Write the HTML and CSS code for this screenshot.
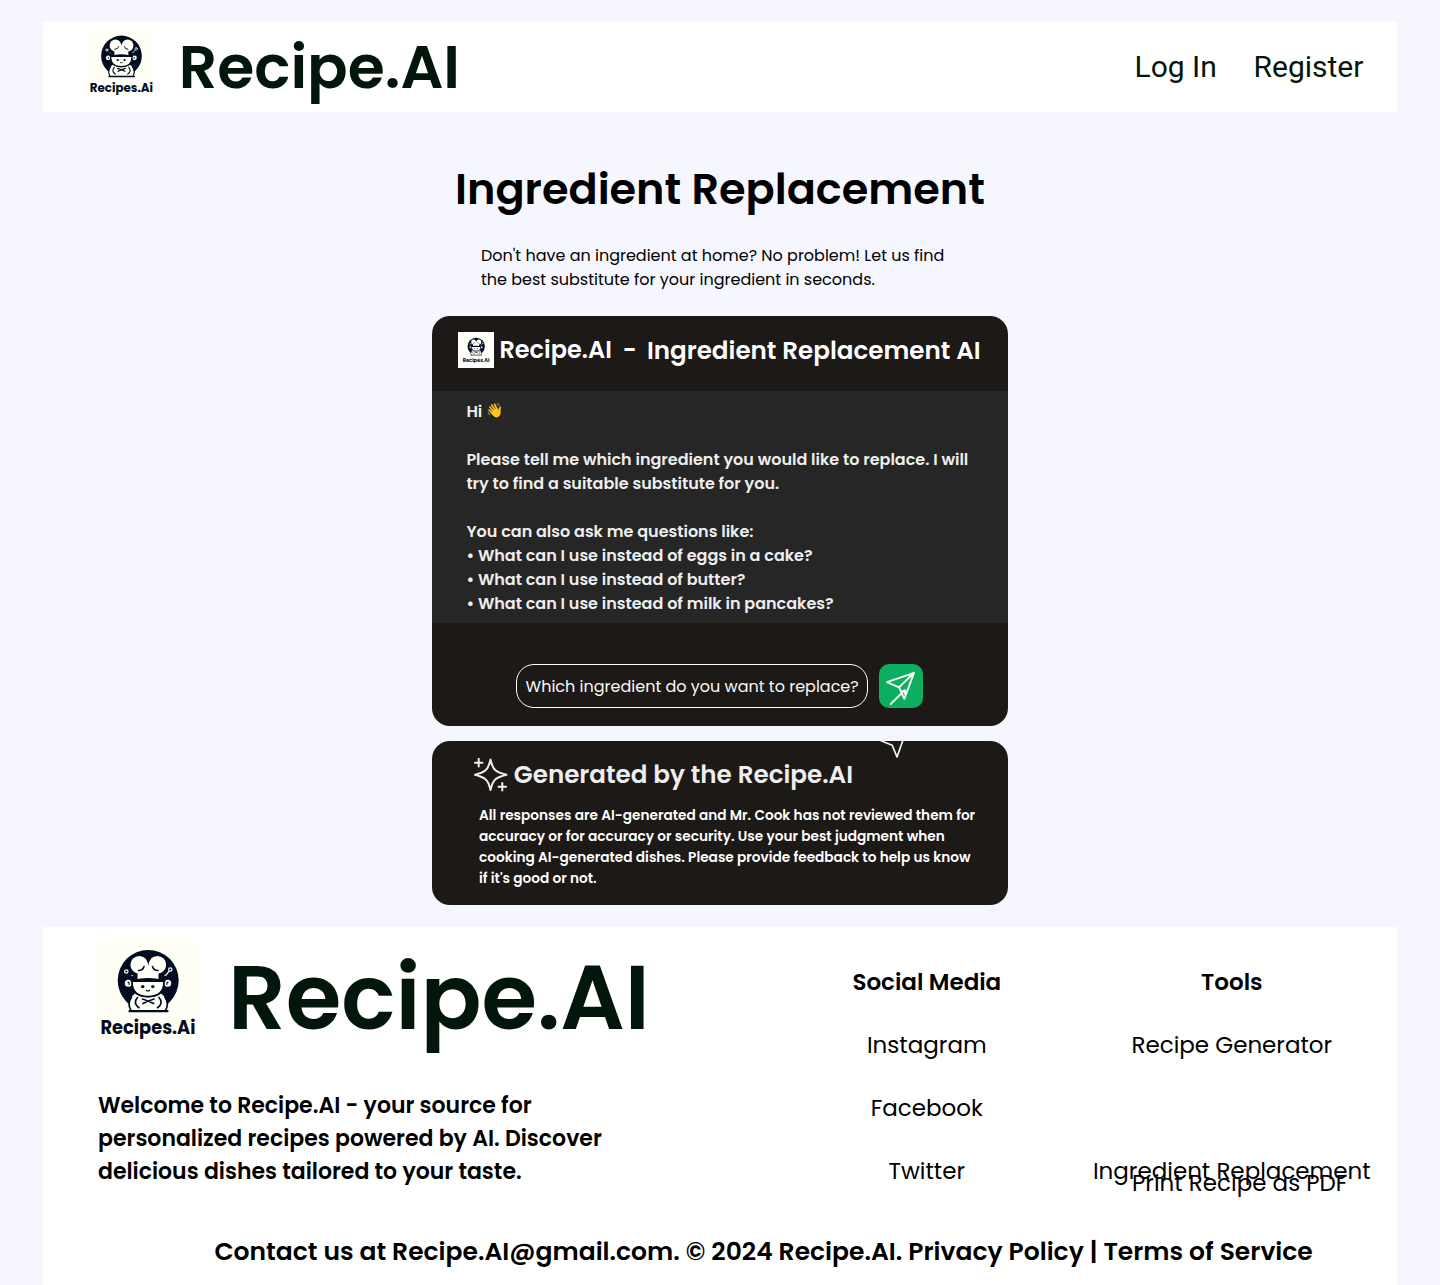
FILE: index.html
```html
<!DOCTYPE html>
<html lang="en">
<head>
<meta charset="utf-8">
<title>Recipe.AI - Ingredient Replacement</title>
<link rel="stylesheet" href="styles.css">
</head>
<body>
<svg class="defs" width="0" height="0" aria-hidden="true">
  <symbol id="chef-logo" viewBox="0 0 99 99">
    <rect width="99" height="99" fill="#fffff5"/>
    <circle cx="50.200" cy="40.400" r="30.500" fill="#020c20"/>
    <g fill="#fffff5">
      <circle cx="41.300" cy="24.800" r="8.900"/>
      <circle cx="59.300" cy="24.800" r="8.900"/>
      <path d="M39.500 31l10.500-6 10.500 6v8q-10.500-2-21 0z"/>
      <path d="M34 42h32q0 14.500-16 14.500T34 42z"/>
      <circle cx="30.300" cy="43.300" r="3.500"/>
      <circle cx="69.700" cy="43.300" r="3.500"/>
      <path d="M37 53.500q13 8 26 0q5.500 4 6 11q0 4-2 6.500H33q-2-2.500-2-6.500q.5-7 6-11z"/>
      <circle cx="34" cy="35.500" r=".7"/>
      <circle cx="67" cy="35.500" r=".7"/>
    </g>
    <path d="M46.500 16.500L50.300 23l3.800-6.500z" fill="#020c20"/>
    <g fill="none" stroke="#020c20" stroke-width="1.700" stroke-linecap="round">
      <path d="M33.500 41q16.500-2 33 0" stroke-width="2"/>
      <path d="M40.500 30.500q4.500 0 5.500-4M60 30.500q-4.500 0-5.500-4" stroke-width="1.500"/>
      <path d="M48.300 50.300q1.700 1.400 3.400 0" stroke-width="1.200"/>
      <path d="M34 42q0 14.500 16 14.500T66 42"/>
      <path d="M33.500 57q-4.500 7-.5 13.500M67 57q4.500 7 .5 13.500"/>
      <path d="M39.500 57.500q-5 5.500 1.500 10.200M61 57.500q5 5.500-1.500 10.200M44.500 59q5 1.500 11 4.500M56 59q-5 1.500-11 4.500"/>
      <path d="M31.500 71.200h38" stroke-width="2.200"/>
      <path d="M30 42.200q1.500.3 1.200 2.300M70 42.200q-1.500.3-1.200 2.300" stroke-width="1.200"/>
    </g>
    <circle cx="44.700" cy="46.600" r="1.700" fill="#020c20"/>
    <circle cx="54.800" cy="46.600" r="1.700" fill="#020c20"/>
    <g fill="none" stroke="#fffff5" stroke-width="1.200" stroke-linecap="round">
      <circle cx="28.300" cy="31.500" r="1.700"/>
      <circle cx="72.300" cy="29.500" r="1.700"/>
      <path d="M71 31.300l-3 3.700"/>
    </g>
    <text class="logo-word" x="2.500" y="94" textLength="95" lengthAdjust="spacingAndGlyphs">Recipes.Ai</text>
  </symbol>
</svg>

<header class="topbar">
  <svg class="topbar-logo"><use href="#chef-logo"/></svg>
  <span class="topbar-brand">Recipe.AI</span>
  <nav class="topbar-nav"><a>Log In</a><a>Register</a></nav>
</header>

<main class="main">
  <h1 class="title">Ingredient Replacement</h1>
  <p class="intro">Don't have an ingredient at home? No problem! Let us find<br>the best substitute for your ingredient in seconds.</p>

  <section class="chat">
    <div class="chat-head">
      <span class="chat-logo"><svg><use href="#chef-logo"/></svg></span>
      <span class="chat-brand">Recipe.AI</span>
      <span class="chat-dash">-</span>
      <span class="chat-name">Ingredient Replacement AI</span>
    </div>
    <div class="chat-body">
      <p>Hi <span class="wave">👋</span></p>
      <p>Please tell me which ingredient you would like to replace. I will<br>try to find a suitable substitute for you.</p>
      <p>You can also ask me questions like:<br>• What can I use instead of eggs in a cake?<br>• What can I use instead of butter?<br>• What can I use instead of milk in pancakes?</p>
    </div>
    <div class="chat-form">
      <div class="field">Which ingredient do you want to replace?</div>
      <button class="send" aria-label="Send">
        <svg width="44" height="44" viewBox="0 0 44 44" fill="none" stroke="#f4f4f4" stroke-width="1.900" stroke-linejoin="round" stroke-linecap="round">
          <path d="M8 18.200L35 8.800 25.300 34.800 20.100 23.300zM20.100 23.300L35 8.800M11.700 40L25.700 26.300M22.200 27.500l3.800-1.200v3.500"/>
        </svg>
      </button>
    </div>
  </section>

  <section class="note">
    <svg class="stray-plane" width="28" height="30" viewBox="0 0 28 30" fill="none" stroke="#f4f4f4" stroke-width="1.700" stroke-linejoin="round">
      <path d="M1 11.700L26.200 2 17 28 12.200 16.300z"/>
    </svg>
    <div class="note-head">
      <svg width="34" height="34" viewBox="0 0 34 34" fill="none" stroke="#eeeeee" stroke-width="2" stroke-linecap="round" stroke-linejoin="round">
        <path d="M16.500 1.500Q18.500 10 21.500 12.200Q24 14.500 32.500 16.700Q24 18.900 21.500 21.200Q18.500 23.500 16.500 32Q14.500 23.500 11.500 21.200Q9 18.900 1 16.700Q9 14.500 11.500 12.200Q14.500 10 16.500 1.500z"/>
        <path d="M4.700 .9v7.600M.9 4.700h7.600M28.300 24.900v7.600M24.500 28.700h7.600"/>
      </svg>
      <h2>Generated by the Recipe.AI</h2>
    </div>
    <p class="note-text">All responses are AI-generated and Mr. Cook has not reviewed them for<br>accuracy or for accuracy or security. Use your best judgment when<br>cooking AI-generated dishes. Please provide feedback to help us know<br>if it's good or not.</p>
  </section>
</main>

<footer class="footer">
  <div class="footer-top">
    <div class="about">
      <div class="about-brand">
        <svg class="about-logo"><use href="#chef-logo"/></svg>
        <span>Recipe.AI</span>
      </div>
      <p class="about-text">Welcome to Recipe.AI - your source for<br>personalized recipes powered by AI. Discover<br>delicious dishes tailored to your taste.</p>
    </div>
    <div class="links social">
      <h3>Social Media</h3>
      <a>Instagram</a>
      <a>Facebook</a>
      <a>Twitter</a>
    </div>
    <div class="links tools">
      <h3>Tools</h3>
      <a>Recipe Generator</a>
      <a class="replacement">Ingredient Replacement</a>
      <a class="print">Print Recipe as PDF</a>
    </div>
  </div>
  <p class="contact">Contact us at Recipe.AI@gmail.com. © 2024 Recipe.AI. Privacy Policy | Terms of Service</p>
</footer>
</body>
</html>
```
FILE: styles.css
```css
* { box-sizing: border-box; }
body {
  margin: 0;
  padding-top: 22px;
  background: #f6f6ff;
  color: #000;
  font-family: Poppins, Inter, sans-serif;
}
h1, h2, h3, p { margin: 0; white-space: nowrap; }
svg { display: block; flex: none; }
.defs { position: absolute; }
.logo-word { font: 700 19.500px Poppins, Inter, sans-serif; fill: #020c20; }

/* Top bar */
.topbar {
  display: flex;
  height: 90px;
  margin: 0 43px;
  padding: 0 33.600px 0 45px;
  background: #fff;
  color: #02160b;
}
.topbar-logo { width: 66px; height: 66px; margin-top: 7px; }
.topbar-brand {
  margin-left: 24.800px;
  font-size: 60px;
  font-weight: 600;
  line-height: 90px;
}
.topbar-nav {
  display: flex;
  gap: 36.700px;
  margin-left: auto;
  font: 400 30px/90px Roboto, sans-serif;
}

/* Main column */
.main { width: 576px; margin: 44px auto 0; }
.title {
  font-size: 43px;
  font-weight: 600;
  line-height: 66px;
  text-align: center;
}
.intro { margin-top: 22px; padding-left: 49px; font-size: 16px; line-height: 24px; }

.chat {
  height: 409.500px;
  margin-top: 24px;
  border-radius: 18px;
  overflow: hidden;
  background: #1d1916;
}
.chat-head {
  display: flex;
  height: 75px;
  padding: 16px 0 0 26px;
  color: #fff;
  font-size: 24px;
  font-weight: 600;
  line-height: 35px;
  white-space: nowrap;
}
.chat-logo { width: 36px; height: 36px; padding: 2.500px 4px; background: #fff; }
.chat-logo svg { width: 28px; height: 28px; }
.chat-brand { margin-left: 5.400px; }
.chat-dash { margin-left: 10.800px; }
.chat-name { margin-left: 10.200px; font-size: 24.640px; line-height: 37px; }
.chat-body {
  display: flex;
  flex-direction: column;
  gap: 24px;
  height: 232px;
  padding: 9px 0 0 34.400px;
  background: #262626;
  color: #eee;
  font-size: 16px;
  font-weight: 600;
  line-height: 24px;
}
.wave { font-size: 14px; line-height: 14px; vertical-align: 2px; }
.chat-form { display: flex; gap: 11px; padding: 41px 0 0 84.400px; }
.field {
  width: 352px;
  height: 44px;
  padding-left: 8.200px;
  border: 1px solid #fff;
  border-radius: 18px;
  color: #f8f8f8;
  font-size: 16px;
  line-height: 44px;
  white-space: nowrap;
}
.send {
  width: 44px;
  height: 44px;
  padding: 0;
  border: 0;
  border-radius: 10px;
  background: #0caf60;
}

.note {
  position: relative;
  height: 164px;
  margin-top: 15.500px;
  padding-top: 17px;
  border-radius: 18px;
  background: #1d1916;
}
.stray-plane { position: absolute; left: 447.700px; top: -12px; }
.note-head { display: flex; padding-left: 42px; color: #eee; }
.note-head h2 {
  margin-left: 5.800px;
  font-size: 24.640px;
  font-weight: 600;
  line-height: 33px;
}
.note-text {
  margin-top: 12.500px;
  padding-left: 47px;
  color: #fff;
  font-size: 13.680px;
  font-weight: 600;
  line-height: 21px;
}

/* Footer */
.footer { height: 358px; margin: 22px 43px 0; background: #fff; }
.footer-top { display: flex; height: 305px; padding-left: 55px; }
.about { width: 728.800px; padding-top: 13px; }
.about-brand {
  display: flex;
  height: 113px;
  color: #02160b;
  font-size: 90px;
  font-weight: 600;
  line-height: 116px;
}
.about-logo { width: 99px; height: 99px; margin-right: 31px; }
.about-text { margin-top: 35.500px; font-size: 22px; font-weight: 600; line-height: 33px; }
.links {
  position: relative;
  display: flex;
  flex-direction: column;
  align-items: center;
  padding-top: 24px;
  font-size: 23px;
  line-height: 63px;
  white-space: nowrap;
}
.links h3 { font-size: inherit; font-weight: 600; }
.social { width: 200px; }
.tools { width: 300px; margin-left: 55px; }
.replacement { margin-top: 63px; }
.print { position: absolute; left: 50.200px; top: 225px; }
.contact {
  padding-left: 171.400px;
  font-size: 25px;
  font-weight: 600;
  line-height: 40px;
}
```
